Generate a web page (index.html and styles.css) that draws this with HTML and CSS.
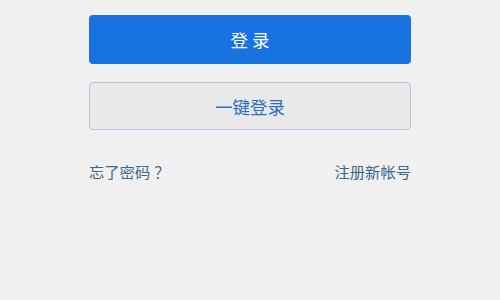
FILE: index.html
```html
<!DOCTYPE html>
<html lang="zh-CN">
<head>
    <meta charset="UTF-8">
    <title>登录</title>
    <link rel="stylesheet" href="styles.css">
</head>
<body>
    <div class="login-box">
        <button class="login-btn">登 录</button>
        <button class="quick-btn">一键登录</button>
        <div class="links">
            <a class="link" href="#">忘了密码<span class="mark">？</span></a>
            <a class="link" href="#">注册新帐号</a>
        </div>
    </div>
</body>
</html>
```

FILE: styles.css
```css
* {
    box-sizing: border-box;
    font-family: "Noto Sans CJK SC", "Noto Sans", sans-serif;
}

body {
    margin: 0;
    background-color: #f0f0f0;
}

.login-box {
    width: 322px;
    margin: 0 auto;
    padding-top: 15px;
    display: flex;
    flex-direction: column;
}

.login-btn, .quick-btn {
    width: 100%;
    border-radius: 4px;
    font-size: 17.5px;
    cursor: pointer;
}

.login-btn {
    height: 49px;
    background-color: #1872e0;
    color: white;
    border: none;
}

.quick-btn {
    height: 48px;
    margin-top: 18px;
    background-color: #e9e9e9;
    color: #2c6fbf;
    border: 1px solid #adc8e4;
}

.links {
    display: flex;
    justify-content: space-between;
    margin-top: 30px;
}

.link {
    font-size: 15.3px;
    line-height: 22px;
    color: #3b6788;
    text-decoration: none;
}

.mark {
    padding-left: 4px;
}
```
